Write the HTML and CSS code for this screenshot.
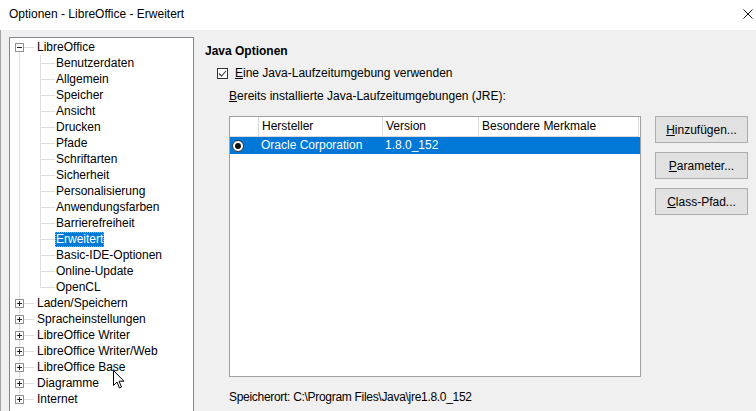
FILE: index.html
```html
<!DOCTYPE html>
<html lang="de">
<head>
    <meta charset="UTF-8">
    <title>Optionen - LibreOffice - Erweitert</title>
    <link rel="stylesheet" href="styles.css">
</head>
<body>
    <div class="window">
        <div class="titlebar">
            <span class="title">Optionen - LibreOffice - Erweitert</span>
            <svg class="close" width="10" height="10" viewBox="0 0 10 10">
                <path d="M0.5 0.5 L9.5 9.5 M9.5 0.5 L0.5 9.5" stroke="#111" stroke-width="1" fill="none"/>
            </svg>
        </div>

        <div class="client">
            <div class="tree">
                <div class="node first"><span class="exp minus"></span><span class="label">LibreOffice</span></div>
                <div class="leaf"><span class="label">Benutzerdaten</span></div>
                <div class="leaf"><span class="label">Allgemein</span></div>
                <div class="leaf"><span class="label">Speicher</span></div>
                <div class="leaf"><span class="label">Ansicht</span></div>
                <div class="leaf"><span class="label">Drucken</span></div>
                <div class="leaf"><span class="label">Pfade</span></div>
                <div class="leaf"><span class="label">Schriftarten</span></div>
                <div class="leaf"><span class="label">Sicherheit</span></div>
                <div class="leaf"><span class="label">Personalisierung</span></div>
                <div class="leaf"><span class="label">Anwendungsfarben</span></div>
                <div class="leaf"><span class="label">Barrierefreiheit</span></div>
                <div class="leaf"><span class="label selected">Erweitert</span></div>
                <div class="leaf"><span class="label">Basic-IDE-Optionen</span></div>
                <div class="leaf"><span class="label">Online-Update</span></div>
                <div class="leaf last"><span class="label">OpenCL</span></div>
                <div class="node"><span class="exp plus"></span><span class="label">Laden/Speichern</span></div>
                <div class="node"><span class="exp plus"></span><span class="label">Spracheinstellungen</span></div>
                <div class="node"><span class="exp plus"></span><span class="label">LibreOffice Writer</span></div>
                <div class="node"><span class="exp plus"></span><span class="label">LibreOffice Writer/Web</span></div>
                <div class="node"><span class="exp plus"></span><span class="label">LibreOffice Base</span></div>
                <div class="node"><span class="exp plus"></span><span class="label">Diagramme</span></div>
                <div class="node last"><span class="exp plus"></span><span class="label">Internet</span></div>
            </div>

            <div class="pane">
                <div class="heading">Java Optionen</div>
                <div class="check-row">
                    <svg class="checkbox" width="11" height="11" viewBox="0 0 11 11">
                        <rect x="0.5" y="0.5" width="10" height="10" fill="#fff" stroke="#333"/>
                        <path d="M2 5.5 L4.5 8 L9 3" stroke="#333" stroke-width="1.1" fill="none"/>
                    </svg>
                    <span><u>E</u>ine Java-Laufzeitumgebung verwenden</span>
                </div>
                <div class="sub-label"><u>B</u>ereits installierte Java-Laufzeitumgebungen (JRE):</div>

                <div class="jre-area">
                    <div class="jre-table">
                        <div class="jre-head">
                            <div class="cell radio-col"></div>
                            <div class="cell">Hersteller</div>
                            <div class="cell">Version</div>
                            <div class="cell">Besondere Merkmale</div>
                        </div>
                        <div class="jre-row selected-row">
                            <div class="cell radio-col">
                                <svg width="12" height="12" viewBox="0 0 12 12">
                                    <circle cx="6" cy="6" r="5.5" fill="#fff" stroke="#333"/>
                                    <circle cx="6" cy="6" r="3" fill="#111"/>
                                </svg>
                            </div>
                            <div class="cell">Oracle Corporation</div>
                            <div class="cell">1.8.0_152</div>
                            <div class="cell"></div>
                        </div>
                    </div>

                    <div class="buttons">
                        <button class="btn"><u>H</u>inzufügen...</button>
                        <button class="btn"><u>P</u>arameter...</button>
                        <button class="btn"><u>C</u>lass-Pfad...</button>
                    </div>
                </div>

                <div class="location">Speicherort: C:\Program Files\Java\jre1.8.0_152</div>
            </div>
        </div>
    </div>

    <!-- mouse pointer over "LibreOffice Base" -->
    <svg class="cursor" width="12" height="19" viewBox="0 0 12 19">
        <path d="M0.5 0.5 L0.5 15.5 L4 12 L6.5 18 L8.5 17 L6 11.2 L11 11.2 Z" fill="#fff" stroke="#000" stroke-width="1"/>
    </svg>
</body>
</html>
```

FILE: styles.css
```css
* {
    box-sizing: border-box;
}
body {
    margin: 0;
    font-family: "Liberation Sans", Arial, sans-serif;
    font-size: 12px;
    color: #000;
    background: #fff;
}
.window {
    width: 756px;
    height: 411px;
    overflow: hidden;
    display: flex;
    flex-direction: column;
}
.titlebar {
    height: 30px;
    flex: none;
    background: #fff;
    display: flex;
    align-items: center;
    justify-content: space-between;
    padding: 0 3px 2px 9px;
}
.title {
    font-size: 12px;
}
.client {
    flex: 1;
    background: #f0f0f0;
    border-left: 1px solid #a5a5a5;
    display: flex;
    align-items: flex-start;
    padding: 7px 0 0 8px;
}

/* tree */
.tree {
    width: 185px;
    height: 390px;
    flex: none;
    background: #fff;
    border: 1px solid #828790;
    padding-top: 1px;
}
.node, .leaf {
    height: 16px;
    line-height: 16px;
    display: flex;
    align-items: center;
    white-space: nowrap;
}
.node {
    background:
        linear-gradient(#dedede, #dedede) 9px 0 / 1px 100% no-repeat,
        linear-gradient(#dedede, #dedede) 14px 8px / 10px 1px no-repeat;
}
.node.first {
    background:
        linear-gradient(#dedede, #dedede) 9px 8px / 1px 8px no-repeat,
        linear-gradient(#dedede, #dedede) 14px 8px / 10px 1px no-repeat;
}
.node.last {
    background:
        linear-gradient(#dedede, #dedede) 9px 0 / 1px 9px no-repeat,
        linear-gradient(#dedede, #dedede) 14px 8px / 10px 1px no-repeat;
}
.node .label {
    margin-left: 12px;
}
.leaf {
    background:
        linear-gradient(#dedede, #dedede) 9px 0 / 1px 100% no-repeat,
        linear-gradient(#dedede, #dedede) 30px 0 / 1px 100% no-repeat,
        linear-gradient(#dedede, #dedede) 31px 8px / 14px 1px no-repeat;
    padding-left: 45px;
}
.leaf.last {
    background:
        linear-gradient(#dedede, #dedede) 9px 0 / 1px 100% no-repeat,
        linear-gradient(#dedede, #dedede) 30px 0 / 1px 9px no-repeat,
        linear-gradient(#dedede, #dedede) 31px 8px / 14px 1px no-repeat;
}
.exp {
    width: 9px;
    height: 9px;
    margin-left: 5px;
    border: 1px solid #919191;
    background: #fff;
    flex: none;
}
.exp.minus {
    background:
        linear-gradient(#222, #222) 1px 3px / 5px 1px no-repeat,
        #fff;
}
.exp.plus {
    background:
        linear-gradient(#222, #222) 1px 3px / 5px 1px no-repeat,
        linear-gradient(#222, #222) 3px 1px / 1px 5px no-repeat,
        #fff;
}
.label {
    padding: 0 1px;
    line-height: 15px;
}
.label.selected {
    background: #0078d7;
    color: #fff;
    outline: 1px dotted #f0a030;
    outline-offset: -1px;
}

/* right pane */
.pane {
    margin-left: 11px;
    padding-top: 6px;
    flex: 1;
}
.heading {
    font-weight: bold;
    line-height: 16px;
}
.check-row {
    margin: 6px 0 0 12px;
    height: 16px;
    display: flex;
    align-items: center;
    gap: 7px;
}
.sub-label {
    margin: 7px 0 0 24px;
    line-height: 16px;
}
.jre-area {
    display: flex;
    align-items: flex-start;
    margin: 12px 0 0 24px;
}
.jre-table {
    width: 412px;
    height: 261px;
    background: #fff;
    border: 1px solid #a0a0a0;
}
.jre-head, .jre-row {
    display: grid;
    grid-template-columns: 29px 124px 96px 160px;
}
.jre-head .cell {
    height: 20px;
    line-height: 19px;
    padding-left: 3px;
    border-right: 1px solid #d9d9d9;
    border-bottom: 1px solid #d9d9d9;
}
.jre-row .cell {
    height: 17px;
    line-height: 17px;
    padding-left: 2px;
}
.selected-row {
    background: #0078d7;
    color: #fff;
    width: 410px;
}
.radio-col {
    display: flex;
    align-items: center;
}
.buttons {
    margin-left: 14px;
    display: flex;
    flex-direction: column;
    gap: 9px;
}
.btn {
    width: 93px;
    height: 27px;
    font: inherit;
    color: #000;
    background: #e1e1e1;
    border: 1px solid #adadad;
    padding: 0;
}
.location {
    margin: 12px 0 0 24px;
    line-height: 16px;
    letter-spacing: -0.3px;
}

.cursor {
    position: absolute;
    left: 113px;
    top: 370px;
}
```
